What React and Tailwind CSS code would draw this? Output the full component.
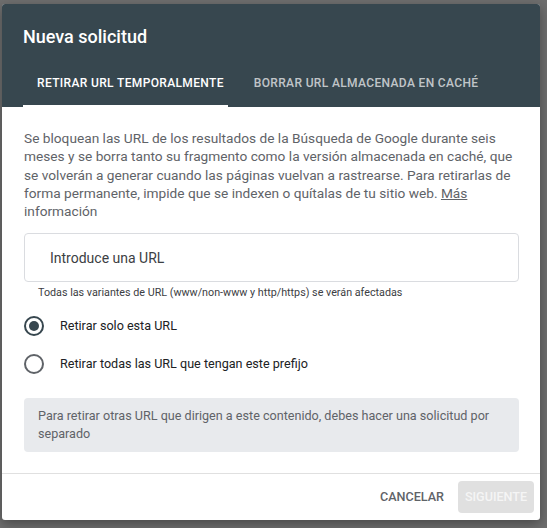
import { useState } from "react";

function Radio({ checked }) {
  return (
    <span
      className={
        "flex h-[20px] w-[20px] shrink-0 items-center justify-center rounded-full border-2 " +
        (checked ? "border-[#37474f]" : "border-[#5f6368]")
      }
    >
      {checked && <span className="h-[10px] w-[10px] rounded-full bg-[#37474f]" />}
    </span>
  );
}

export default function App() {
  const [tab, setTab] = useState(0);
  const [mode, setMode] = useState("single");
  const [url, setUrl] = useState("");

  const tabs = [
    { label: "Retirar URL temporalmente", pad: "pl-[14px] pr-[4px]" },
    { label: "Borrar URL almacenada en caché", pad: "pl-[26px] pr-[14px]" },
  ];

  return (
    <div className="h-[528px] w-[547px] overflow-hidden bg-[#6e6e6e] pt-[4px] pl-[2px] font-['Roboto',sans-serif]">
      <div className="w-[538px] overflow-hidden rounded-[3px] bg-white shadow-[0_4px_12px_rgba(0,0,0,0.35)]">
        {/* Header */}
        <div className="bg-[#37474f] pt-[21px] pl-[21px]">
          <h1 className="text-[18px] leading-[24px] font-medium text-white">Nueva solicitud</h1>
          <div className="mt-[12px] flex">
            {tabs.map((t, i) => (
              <button
                key={t.label}
                type="button"
                onClick={() => setTab(i)}
                className={
                  "h-[46px] border-b-2 text-[12px] font-medium uppercase tracking-[0.35px] " +
                  t.pad +
                  " " +
                  (tab === i ? "border-white text-white" : "border-transparent text-white/70")
                }
              >
                {t.label}
              </button>
            ))}
          </div>
        </div>

        {/* Body */}
        <div className="pt-[22px] pr-[21px] pb-[21px] pl-[22px]">
          <p className="text-[13.7px] leading-[18.3px] text-[#5f6368]">
            Se bloquean las URL de los resultados de la Búsqueda de Google durante seis meses y se
            borra tanto su fragmento como la versión almacenada en caché, que se volverán a generar
            cuando las páginas vuelvan a rastrearse. Para retirarlas de forma permanente, impide que
            se indexen o quítalas de tu sitio web. <a className="underline" href="#">Más</a>{" "}
            información
          </p>

          <input
            value={url}
            onChange={(e) => setUrl(e.target.value)}
            placeholder="Introduce una URL"
            className="mt-[13px] h-[49px] w-full rounded-[4px] border border-[#dadce0] px-[25px] text-[14px] text-[#202124] outline-none placeholder:text-[#3c4043]"
          />
          <div className="mt-[5px] pl-[14px] text-[10.75px] leading-[12px] text-[#3c4043]">
            Todas las variantes de URL (www/non-www y http/https) se verán afectadas
          </div>

          <div className="mt-[8px]">
            <label
              className="flex h-[38px] cursor-pointer items-center gap-[16px]"
              onClick={() => setMode("single")}
            >
              <Radio checked={mode === "single"} />
              <span className="text-[12.6px] text-[#202124]">Retirar solo esta URL</span>
            </label>
            <label
              className="flex h-[38px] cursor-pointer items-center gap-[16px]"
              onClick={() => setMode("prefix")}
            >
              <Radio checked={mode === "prefix"} />
              <span className="text-[12.6px] text-[#202124]">
                Retirar todas las URL que tengan este prefijo
              </span>
            </label>
          </div>

          <div className="mt-[15px] rounded-[4px] bg-[#e8eaed] px-[14px] py-[9px] text-[12.6px] leading-[18px] text-[#5f6368]">
            Para retirar otras URL que dirigen a este contenido, debes hacer una solicitud por
            separado
          </div>
        </div>

        {/* Footer */}
        <div className="flex items-center justify-end gap-[6px] border-t border-[#e0e0e0] py-[7px] pr-[6px]">
          <button
            type="button"
            className="h-[32px] rounded-[4px] px-[8px] text-[12.6px] font-medium uppercase text-[#5f6368]"
          >
            Cancelar
          </button>
          <button
            type="button"
            disabled
            className="h-[32px] w-[76px] rounded-[4px] bg-[#e0e0e0] text-[12.6px] font-medium uppercase text-[#f5f5f5]"
          >
            Siguiente
          </button>
        </div>
      </div>
    </div>
  );
}
